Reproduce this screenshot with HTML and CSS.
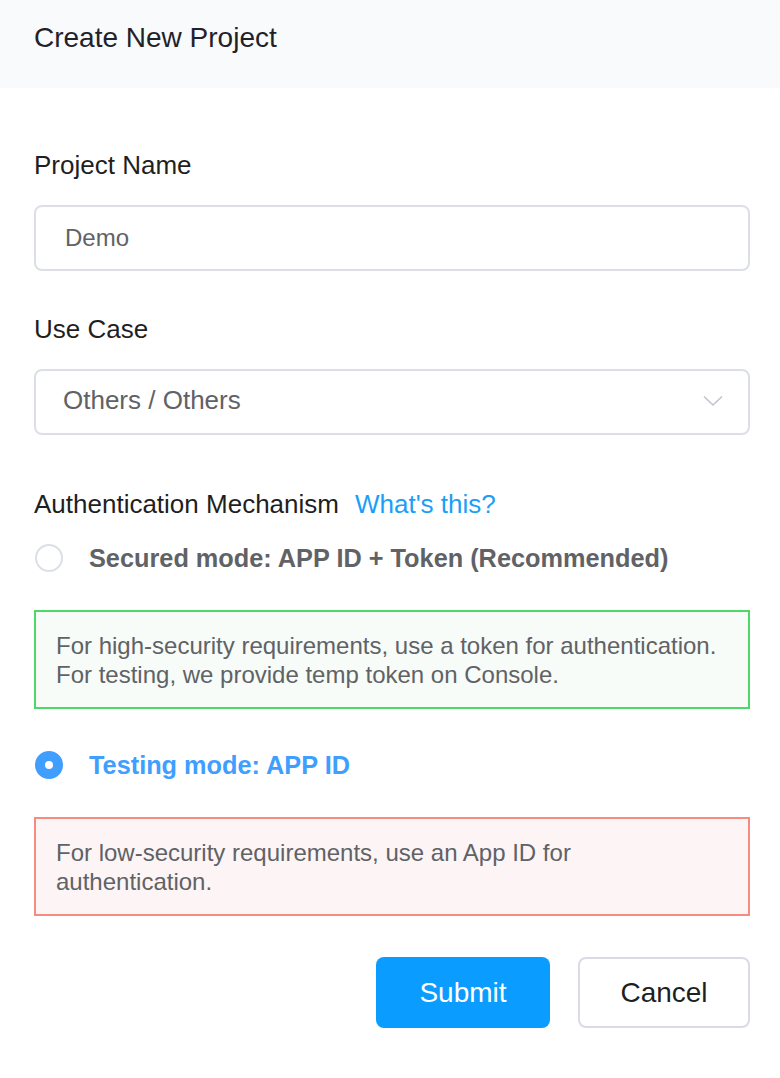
FILE: index.html
```html
<!DOCTYPE html>
<html>
<head>
<meta charset="utf-8">
<link rel="stylesheet" href="styles.css">
</head>
<body>
<div class="dialog">
  <div class="header"><span class="title">Create New Project</span></div>
  <div class="form">
    <div class="field">
      <div class="label">Project Name</div>
      <div class="input"><span class="value">Demo</span></div>
    </div>
    <div class="field">
      <div class="label">Use Case</div>
      <div class="input select">
        <span class="value select-value">Others / Others</span>
        <svg class="chevron" width="20" height="12" viewBox="0 0 20 12"><path d="M1 1.5 L10 10 L19 1.5" fill="none" stroke="#c0c4cc" stroke-width="1.6"/></svg>
      </div>
    </div>
    <div class="auth">
      <div class="label auth-label">Authentication Mechanism <a class="link">What's this?</a></div>
      <div class="radio">
        <span class="dot"></span>
        <span class="radio-text">Secured mode: APP ID + Token (Recommended)</span>
      </div>
      <div class="note note-green">For high-security requirements, use a token for authentication. For testing, we provide temp token on Console.</div>
      <div class="radio checked">
        <span class="dot"></span>
        <span class="radio-text">Testing mode: APP ID</span>
      </div>
      <div class="note note-red">For low-security requirements, use an App ID for authentication.</div>
    </div>
    <div class="actions">
      <button class="btn btn-primary">Submit</button>
      <button class="btn btn-default">Cancel</button>
    </div>
  </div>
</div>
</body>
</html>
```
FILE: styles.css
```css
* { box-sizing: border-box; }
html, body { margin: 0; padding: 0; background: #ffffff; }
body { font-family: "Liberation Sans", Arial, sans-serif; color: #1f1f1f; }

.dialog { width: 780px; }

.header {
  height: 88px;
  background: #f9fafc;
  padding: 18px 34px 0;
}
.title { font-size: 28px; line-height: 40px; color: #1f2329; }

.form { padding: 59px 30px 0 34px; }

.field { display: flex; flex-direction: column; }
.field + .field { margin-top: 40px; }

.label { font-size: 26px; line-height: 36px; color: #1f1f1f; margin-bottom: 22px; }

.input {
  height: 66px;
  border: 2px solid #dcdfe6;
  border-radius: 8px;
  display: flex;
  align-items: center;
  padding: 0 29px;
}
.value { font-size: 24px; color: #606266; }
.select { padding: 0 25px 4px 27px; justify-content: space-between; }
.select-value { font-size: 26px; }
.chevron { display: block; margin-top: 2px; }

.auth { margin-top: 51px; }
.auth-label { margin-bottom: 0; display: flex; align-items: baseline; gap: 16px; }
.link { color: #1a9ff7; font-size: 26px; }

.radio {
  display: flex;
  align-items: center;
  height: 36px;
  margin-top: 18px;
  margin-bottom: 34px;
}
.dot {
  width: 28px; height: 28px;
  border-radius: 50%;
  border: 2px solid #dcdfe6;
  background: #fff;
  margin-left: 1px;
  margin-right: 26px;
  flex: none;
  position: relative;
}
.radio-text { font-size: 25.3px; font-weight: bold; color: #606266; }
.radio.checked { margin-top: 38px; margin-bottom: 34px; }
.radio.checked .dot { background: #409eff; border-color: #409eff; }
.radio.checked .dot::after {
  content: "";
  position: absolute;
  left: 50%; top: 50%;
  width: 8px; height: 8px;
  margin: -4px 0 0 -4px;
  border-radius: 50%;
  background: #fff;
}
.radio.checked .radio-text { color: #409eff; }

.note {
  border: 2px solid;
  padding: 19px 20px 18px 20px;
  font-size: 24px;
  line-height: 29px;
  color: #606266;
  min-height: 99px;
}
.note-green { border-color: #4fd867; background: #f7fcf8; }
.note-red { border-color: #f78a82; background: #fdf5f5; }

.actions {
  display: flex;
  justify-content: flex-end;
  gap: 28px;
  margin-top: 41px;
}
.btn {
  height: 71px;
  border-radius: 8px;
  font-family: "Liberation Sans", Arial, sans-serif;
  font-size: 28px;
  padding: 0;
}
.btn-primary { width: 174px; background: #0a9dff; border: none; color: #fff; }
.btn-default { width: 172px; background: #fff; border: 2px solid #dcdae6; color: #1f1f1f; }
```
